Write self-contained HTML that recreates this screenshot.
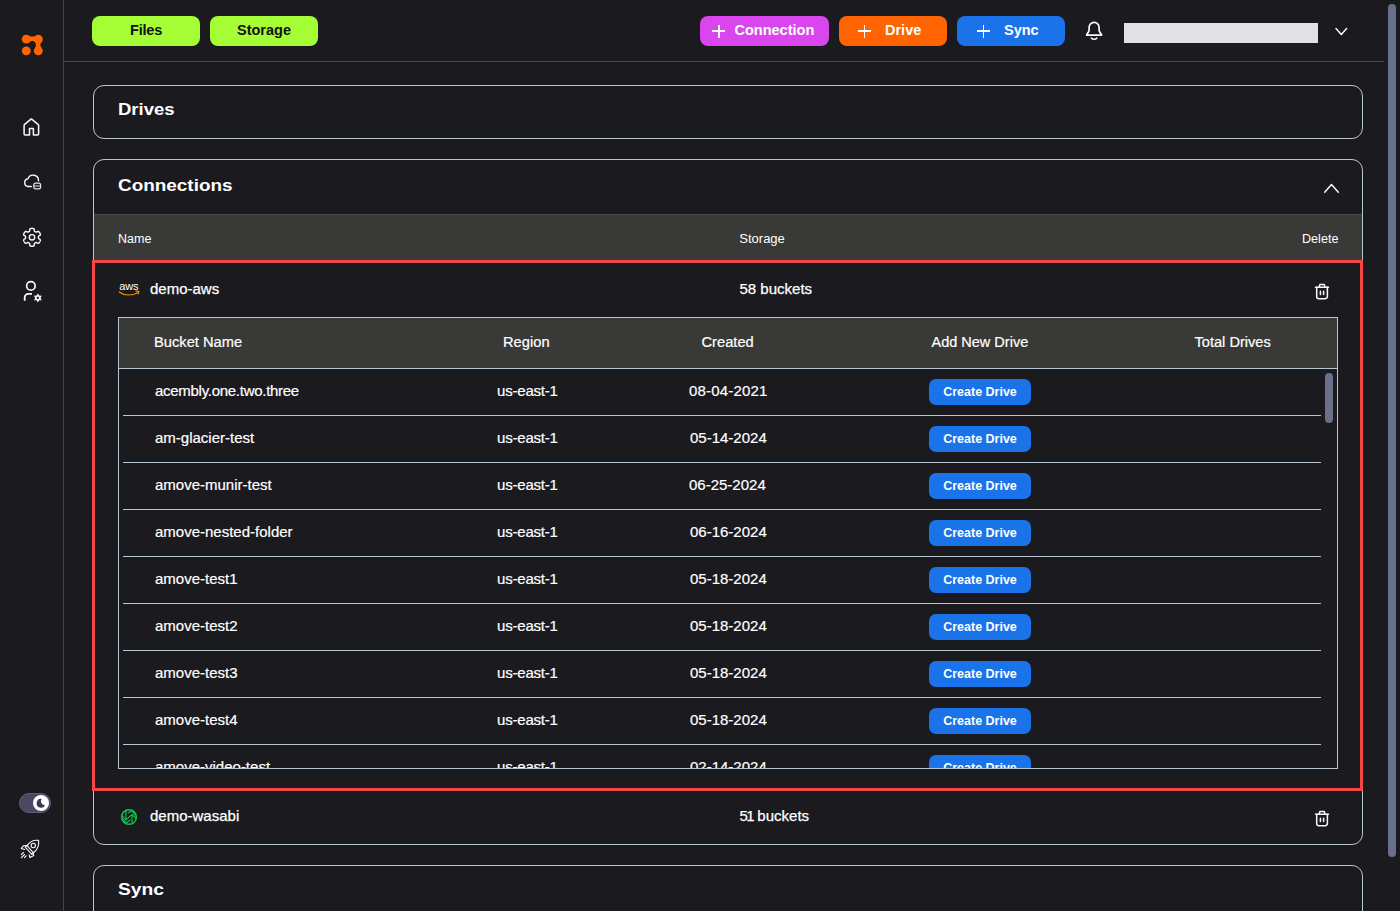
<!DOCTYPE html>
<html lang="en">
<head>
<meta charset="utf-8">
<title>Storage</title>
<style>
*{box-sizing:border-box;margin:0;padding:0}
html,body{width:1400px;height:911px;overflow:hidden;background:#1b1a1f}
body{position:relative;font-family:"Liberation Sans",Arial,sans-serif;color:#fff;-webkit-font-smoothing:antialiased}
.abs{position:absolute}
.t{position:absolute;white-space:nowrap;line-height:1}
/* sidebar + header */
#sideline{left:63px;top:0;width:1px;height:911px;background:#464644}
#headline{left:64px;top:61px;width:1320px;height:1px;background:#464644}
.gbtn{top:16px;height:30px;width:108px;border-radius:8px;background:#a5fd36;color:#111;font-weight:700;font-size:14.5px;text-align:center;line-height:29px}
.abtn{top:16px;height:30px;border-radius:8px;color:#fff;font-weight:700;font-size:14.5px}
.abtn .t{top:7px}
.plus{position:absolute;top:8.5px;width:13px;height:13px}
.plus:before{content:"";position:absolute;left:0;top:5.65px;width:13px;height:1.7px;background:#fff}
.plus:after{content:"";position:absolute;left:5.65px;top:0;width:1.7px;height:13px;background:#fff}
#redact{left:1124px;top:23px;width:194px;height:20px;background:#dfe1e5}
#pscroll{left:1388px;top:4px;width:8px;height:853px;border-radius:4px;background:#69718a}
/* panels */
.panel{left:93px;width:1270px;border:1px solid #b8c5d3;border-radius:11px}
.title{font-weight:700;font-size:16px;transform-origin:0 0;letter-spacing:0}
.hdr{background:#393937;border-top:1px solid #4a4a48}
#red{left:92px;top:260px;width:1271px;height:531px;border:3px solid #f74444}
.ms{-webkit-text-stroke:0.25px #fff}
/* inner table */
#itab{left:118px;top:317px;width:1220px;height:452px;border:1px solid #b8c5d3;overflow:hidden}
#ihdr{left:0;top:0;width:1218px;height:51px;background:#393937;border-bottom:1px solid #b8c5d3}
.row{position:absolute;left:4px;width:1198px;height:47px;border-bottom:1px solid #b8c5d3}
.c{position:absolute;white-space:nowrap;line-height:1;font-size:15px;top:14px;-webkit-text-stroke:0.2px #fff}
.cd{position:absolute;left:806px;top:10px;width:102px;height:26px;border-radius:7px;background:#1a73e8;color:#fff;font-weight:700;font-size:12.5px;text-align:center;line-height:26px}
#ithumb{left:1206px;top:55px;width:8px;height:50px;border-radius:4px;background:#69718a}
</style>
</head>
<body>
<!-- sidebar -->
<div class="abs" id="sideline"></div>
<div class="abs" id="headline"></div>

<!-- header buttons -->
<div class="abs gbtn" style="left:92px;letter-spacing:-0.2px">Files</div>
<div class="abs gbtn" style="left:210px">Storage</div>

<div class="abs abtn" style="left:700px;width:129px;background:#da46ee"><i class="plus" style="left:12.3px"></i><span class="t" style="left:34.5px">Connection</span></div>
<div class="abs abtn" style="left:839px;width:108px;background:#ff6400"><i class="plus" style="left:19px"></i><span class="t" style="left:46px">Drive</span></div>
<div class="abs abtn" style="left:957px;width:108px;background:#1a73e8"><i class="plus" style="left:20px"></i><span class="t" style="left:47px">Sync</span></div>

<div class="abs" id="redact"></div>
<div class="abs" id="pscroll"></div>

<!-- Drives panel -->
<div class="abs panel" style="top:85px;height:54px"></div>
<div class="t title" style="left:117.5px;top:102px;transform:scaleX(1.155)">Drives</div>

<!-- Connections panel -->
<div class="abs panel" style="top:159px;height:686px"></div>
<div class="t title" style="left:117.5px;top:178px;transform:scaleX(1.182)">Connections</div>
<div class="abs hdr" style="left:94px;top:214px;width:1268px;height:47px"></div>
<div class="t" style="left:118px;top:232.7px;font-size:12.5px">Name</div>
<div class="t" style="left:739.3px;top:232.3px;font-size:13px">Storage</div>
<div class="t" style="left:1302px;top:233px;font-size:12.6px">Delete</div>

<div class="t ms" style="left:150px;top:281px;font-size:15px">demo-aws</div>
<div class="t ms" style="left:739.5px;top:281px;font-size:15px">58 buckets</div>

<!-- inner table -->
<div class="abs" id="itab">
  <div class="abs" id="ihdr">
    <span class="c" style="left:35px;top:17px;font-size:14.7px">Bucket Name</span>
    <span class="c" style="left:384px;top:17px;font-size:14.7px">Region</span>
    <span class="c" style="left:582.5px;top:17px;font-size:14.7px">Created</span>
    <span class="c" style="left:812.5px;top:17px;font-size:14.5px">Add New Drive</span>
    <span class="c" style="left:1075.5px;top:17px;font-size:14.6px">Total Drives</span>
  </div>
  <div class="row" style="top:51px"><span class="c" style="left:32px;letter-spacing:-0.28px">acembly.one.two.three</span><span class="c" style="left:374px;letter-spacing:-0.2px">us-east-1</span><span class="c" style="left:566px;letter-spacing:0.17px">08-04-2021</span><span class="cd">Create Drive</span></div>
  <div class="row" style="top:98px"><span class="c" style="left:32px">am-glacier-test</span><span class="c" style="left:374px;letter-spacing:-0.2px">us-east-1</span><span class="c" style="left:567px">05-14-2024</span><span class="cd">Create Drive</span></div>
  <div class="row" style="top:145px"><span class="c" style="left:32px">amove-munir-test</span><span class="c" style="left:374px;letter-spacing:-0.2px">us-east-1</span><span class="c" style="left:566px">06-25-2024</span><span class="cd">Create Drive</span></div>
  <div class="row" style="top:192px"><span class="c" style="left:32px">amove-nested-folder</span><span class="c" style="left:374px;letter-spacing:-0.2px">us-east-1</span><span class="c" style="left:567px">06-16-2024</span><span class="cd">Create Drive</span></div>
  <div class="row" style="top:239px"><span class="c" style="left:32px">amove-test1</span><span class="c" style="left:374px;letter-spacing:-0.2px">us-east-1</span><span class="c" style="left:567px">05-18-2024</span><span class="cd">Create Drive</span></div>
  <div class="row" style="top:286px"><span class="c" style="left:32px">amove-test2</span><span class="c" style="left:374px;letter-spacing:-0.2px">us-east-1</span><span class="c" style="left:567px">05-18-2024</span><span class="cd">Create Drive</span></div>
  <div class="row" style="top:333px"><span class="c" style="left:32px">amove-test3</span><span class="c" style="left:374px;letter-spacing:-0.2px">us-east-1</span><span class="c" style="left:567px">05-18-2024</span><span class="cd">Create Drive</span></div>
  <div class="row" style="top:380px"><span class="c" style="left:32px">amove-test4</span><span class="c" style="left:374px;letter-spacing:-0.2px">us-east-1</span><span class="c" style="left:567px">05-18-2024</span><span class="cd">Create Drive</span></div>
  <div class="row" style="top:427px"><span class="c" style="left:32px">amove-video-test</span><span class="c" style="left:374px;letter-spacing:-0.2px">us-east-1</span><span class="c" style="left:567px">02-14-2024</span><span class="cd">Create Drive</span></div>
  <div class="abs" id="ithumb"></div>
</div>

<div class="abs" id="red"></div>

<div class="t ms" style="left:150px;top:808px;font-size:15px">demo-wasabi</div>
<div class="t ms" style="left:739.5px;top:808px;font-size:15px"><span style="letter-spacing:-1.5px">51</span> buckets</div>

<!-- Sync panel -->
<div class="abs panel" style="top:865px;height:80px"></div>
<div class="t title" style="left:117.5px;top:882px;transform:scaleX(1.203)">Sync</div>


<!-- icon overlay -->
<svg class="abs" id="icons" style="left:0;top:0" width="1400" height="911" viewBox="0 0 1400 911" fill="none" stroke="#fafafa" stroke-width="1.5" stroke-linecap="round" stroke-linejoin="round">
  <!-- logo -->
  <g fill="#ff6600" stroke="none">
    <circle cx="26.3" cy="39.15" r="4.45"/><circle cx="38.3" cy="39.15" r="4.45"/>
    <circle cx="26.3" cy="50.85" r="4.45"/><circle cx="38.3" cy="50.85" r="4.45"/>
    <path d="M29.2,35.65 Q32.3,37.5 35.4,35.65 L35.4,42.55 Q32.3,39.6 29.2,42.55 Z"/>
    <path d="M34.85,42 Q37.1,44.95 34.85,47.9 L41.75,47.9 Q38.7,44.95 41.75,42 Z"/>
  </g>
  <!-- home -->
  <path d="M24.1,125.3 Q24.1,124.7 24.6,124.3 L31.3,118.9 L38.1,124.3 Q38.6,124.7 38.6,125.3 V134 A1,1 0 0 1 37.6,135 H33.4 V128.6 H29.5 V135 H25.1 A1,1 0 0 1 24.1,134 Z"/>
  <!-- cloud + db -->
  <path d="M31.3,186.5 H28 A3.9,3.9 0 0 1 28,178.8 A5.4,5.4 0 0 1 38.5,180.7" stroke-width="1.4"/>
  <g stroke-width="1.2" stroke="#e4e4e4"><rect x="33.8" y="183.2" width="6.8" height="5.6" rx="1.9"/><path d="M34,186 H40.4"/></g>
  <!-- gear -->
  <path d="M38.50,237.30 L38.50,237.53 L38.48,237.75 L38.46,237.98 L38.44,238.20 L38.65,238.47 L39.18,238.83 L39.82,239.25 L40.32,239.68 L40.46,240.05 L40.36,240.34 L40.25,240.63 L40.13,240.92 L40.00,241.20 L39.86,241.48 L39.71,241.75 L39.55,242.02 L39.38,242.28 L39.20,242.53 L39.01,242.78 L38.82,243.02 L38.61,243.26 L38.22,243.31 L37.60,243.09 L36.91,242.76 L36.34,242.47 L36.00,242.42 L35.82,242.56 L35.63,242.69 L35.44,242.81 L35.25,242.93 L35.05,243.04 L34.85,243.14 L34.64,243.24 L34.43,243.33 L34.31,243.64 L34.27,244.29 L34.22,245.04 L34.09,245.69 L33.85,246.01 L33.55,246.06 L33.24,246.11 L32.93,246.15 L32.62,246.18 L32.31,246.19 L32.00,246.20 L31.69,246.19 L31.38,246.18 L31.07,246.15 L30.76,246.11 L30.45,246.06 L30.15,246.01 L29.91,245.69 L29.78,245.04 L29.73,244.29 L29.69,243.64 L29.57,243.33 L29.36,243.24 L29.15,243.14 L28.95,243.04 L28.75,242.93 L28.56,242.81 L28.37,242.69 L28.18,242.56 L28.00,242.42 L27.66,242.47 L27.09,242.76 L26.40,243.09 L25.78,243.31 L25.39,243.26 L25.18,243.02 L24.99,242.78 L24.80,242.53 L24.62,242.28 L24.45,242.02 L24.29,241.75 L24.14,241.48 L24.00,241.20 L23.87,240.92 L23.75,240.63 L23.64,240.34 L23.54,240.05 L23.68,239.68 L24.18,239.25 L24.82,238.83 L25.35,238.47 L25.56,238.20 L25.54,237.98 L25.52,237.75 L25.50,237.53 L25.50,237.30 L25.50,237.07 L25.52,236.85 L25.54,236.62 L25.56,236.40 L25.35,236.13 L24.82,235.77 L24.18,235.35 L23.68,234.92 L23.54,234.55 L23.64,234.26 L23.75,233.97 L23.87,233.68 L24.00,233.40 L24.14,233.12 L24.29,232.85 L24.45,232.58 L24.62,232.32 L24.80,232.07 L24.99,231.82 L25.18,231.58 L25.39,231.34 L25.78,231.29 L26.40,231.51 L27.09,231.84 L27.66,232.13 L28.00,232.18 L28.18,232.04 L28.37,231.91 L28.56,231.79 L28.75,231.67 L28.95,231.56 L29.15,231.46 L29.36,231.36 L29.57,231.27 L29.69,230.96 L29.73,230.31 L29.78,229.56 L29.91,228.91 L30.15,228.59 L30.45,228.54 L30.76,228.49 L31.07,228.45 L31.38,228.42 L31.69,228.41 L32.00,228.40 L32.31,228.41 L32.62,228.42 L32.93,228.45 L33.24,228.49 L33.55,228.54 L33.85,228.59 L34.09,228.91 L34.22,229.56 L34.27,230.31 L34.31,230.96 L34.43,231.27 L34.64,231.36 L34.85,231.46 L35.05,231.56 L35.25,231.67 L35.44,231.79 L35.63,231.91 L35.82,232.04 L36.00,232.18 L36.34,232.13 L36.91,231.84 L37.60,231.51 L38.22,231.29 L38.61,231.34 L38.82,231.58 L39.01,231.82 L39.20,232.07 L39.38,232.32 L39.55,232.58 L39.71,232.85 L39.86,233.12 L40.00,233.40 L40.13,233.68 L40.25,233.97 L40.36,234.26 L40.46,234.55 L40.32,234.92 L39.82,235.35 L39.18,235.77 L38.65,236.13 L38.44,236.40 L38.46,236.62 L38.48,236.85 L38.50,237.07Z" stroke-width="1.4"/><circle cx="32" cy="237.3" r="2.7" stroke-width="1.4"/>
  <!-- user cog -->
  <circle cx="30.9" cy="285.9" r="4.25" stroke-width="1.7"/>
  <path d="M24.7,300.8 V297.6 A3.8,3.8 0 0 1 28.5,293.8 H32" stroke-width="1.8" stroke-linecap="butt"/>
  <path d="M37.85,293.45 L39.23,295.57 L41.75,295.70 L40.60,297.95 L41.75,300.20 L39.23,300.33 L37.85,302.45 L36.48,300.33 L33.95,300.20 L35.10,297.95 L33.95,295.70 L36.48,295.57Z" fill="#f2f2f2" stroke="none"/><circle cx="37.85" cy="297.95" r="1.15" fill="#1b1a1f" stroke="none"/>
  <!-- toggle -->
  <rect x="19.5" y="793.5" width="31" height="19" rx="9.5" fill="#4b4962" stroke="#605e7c" stroke-width="1"/>
  <circle cx="41" cy="803" r="8" fill="#fff" stroke="none"/>
  <path d="M41.7,798.9 A4.4,4.4 0 1 0 45,805.2 A3.9,3.9 0 0 1 41.7,798.9 Z" fill="#3b3950" stroke="none"/>
  <!-- rocket -->
  <g stroke-width="1.1">
    <path d="M38.6,840.4 C34.6,839.8 29.8,841.6 27,845.6 L33.3,852.7 C37.4,850.2 39.3,845 38.6,840.4 Z"/>
    <circle cx="33.3" cy="845.5" r="2.2"/>
    <path d="M27,845.6 L25.2,847.1 L31.9,854.4 L33.3,852.7"/>
    <path d="M27,845.6 L23.6,845.7 L21.2,848.4 L24.6,849.5"/>
    <path d="M33.3,852.7 L33.7,855.5 L29.9,857.6 L29.2,854.7"/>
    <path d="M21.3,854.4 L23.5,852.5 M21.3,857.6 L24.5,854.5 M24.4,857.6 L26.3,855.8"/>
  </g>
  <!-- bell -->
  <path d="M1089.1,30.3 V27.4 A5,5 0 0 1 1099.1,27.4 V30.3 C1099.1,32.4 1101.6,33.6 1101.6,35.1 H1086.6 C1086.6,33.6 1089.1,32.4 1089.1,30.3 Z" stroke-width="1.7"/>
  <path d="M1091.3,38 A3.6,3.6 0 0 0 1096.9,38"/>
  <!-- chevrons -->
  <path d="M1336,28.6 L1341.3,34.4 L1346.6,28.6"/>
  <path d="M1324.7,192.2 L1331.5,184.5 L1338.3,192.2"/>
  <!-- trash 1 -->
  <g>
    <path d="M1315.5,287.2 H1328.5 M1319,287.2 L1319.9,284.5 H1324.2 L1325.1,287.2"/>
    <path d="M1316.7,287.2 V296.4 A2.3,2.3 0 0 0 1319,298.7 H1325.1 A2.3,2.3 0 0 0 1327.4,296.4 V287.2"/>
    <path d="M1320.4,291.3 V294.6 M1323.6,291.3 V294.6"/>
  </g>
  <g transform="translate(0,527)">
    <path d="M1315.5,287.2 H1328.5 M1319,287.2 L1319.9,284.5 H1324.2 L1325.1,287.2"/>
    <path d="M1316.7,287.2 V296.4 A2.3,2.3 0 0 0 1319,298.7 H1325.1 A2.3,2.3 0 0 0 1327.4,296.4 V287.2"/>
    <path d="M1320.4,291.3 V294.6 M1323.6,291.3 V294.6"/>
  </g>
  <!-- aws smile -->
  <g stroke="#f29100" stroke-width="1.2">
    <path d="M119.3,292 C124,295.8 132,296 137.6,292.7"/>
    <path d="M136,291.2 L138.8,291.3 L138.2,293.8"/>
  </g>
  <!-- wasabi -->
  <g stroke="#0fc850" stroke-width="1.1" stroke-linecap="butt">
    <circle cx="129" cy="817" r="7.35" stroke-width="1.5"/>
    <path d="M125.9,811 V819.4 M132.1,814.8 V823"/>
    <path d="M122.2,815.9 L125.9,819.8 L132.1,814.5 L135.9,818.2"/>
    <path d="M127.8,813.2 L131.4,810.7 L135.8,815.3"/>
    <path d="M122.4,818.9 L126.5,822.9 L130.5,819.8"/>
  </g>
</svg>
<div class="t" style="left:119.3px;top:280.5px;font-size:11px;letter-spacing:-0.2px">aws</div>

</body>
</html>
